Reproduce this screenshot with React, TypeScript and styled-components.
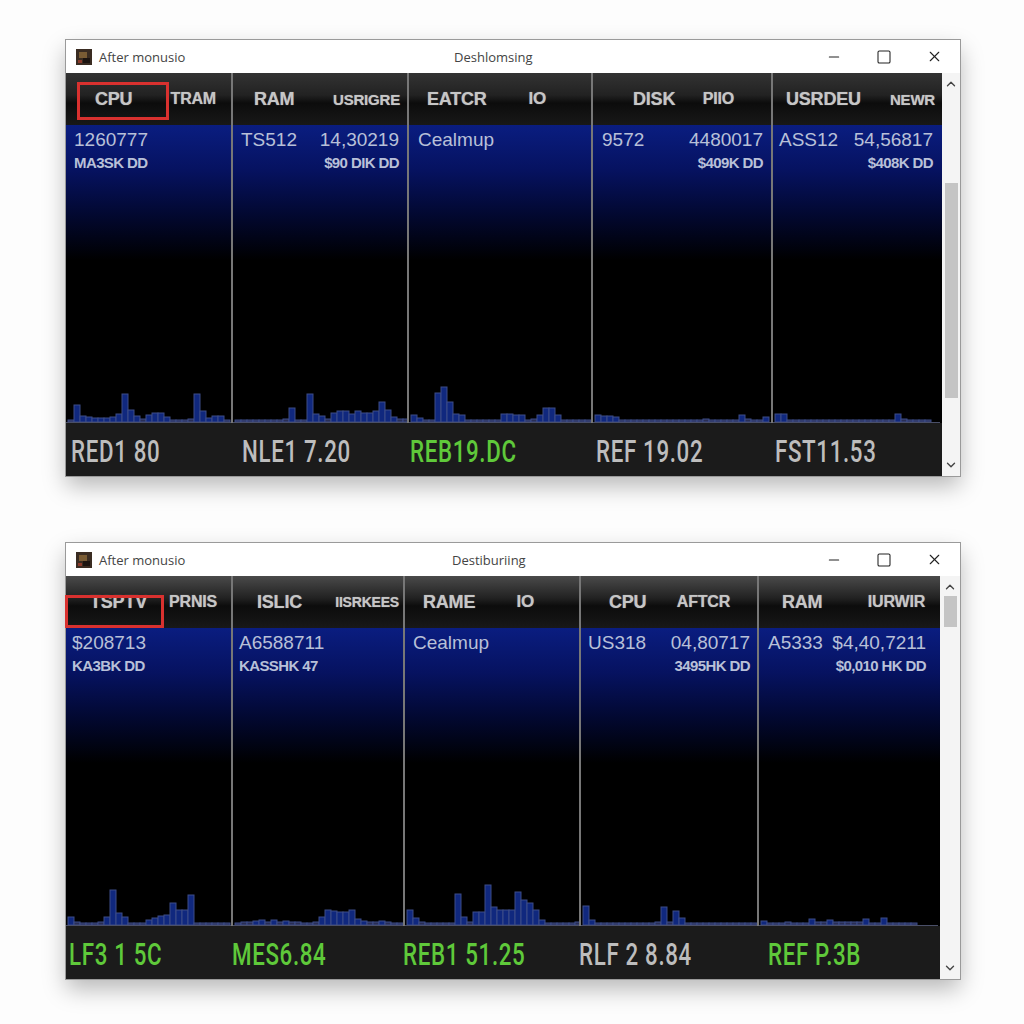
import React from 'react';
import styled, { createGlobalStyle } from 'styled-components';
import { ChevronDown, ChevronUp, Minus, Square, X } from 'lucide-react';

const GlobalStyle = createGlobalStyle`
  html, body {
    margin: 0;
    background: #fdfdfd;
  }
`;

const Page = styled.div`
  display: flex;
  flex-direction: column;
  gap: 67px;
  width: 1024px;
  height: 1024px;
  box-sizing: border-box;
  padding: 40px 0 0 66px;
  overflow: hidden;
`;

const Window = styled.section`
  position: relative;
  display: flex;
  flex-direction: column;
  width: 894px;
  height: 436px;
  background: #fff;
  outline: 1px solid #9a9a9a;
  box-shadow: 0 10px 22px rgba(0, 0, 0, 0.28);
`;

const TitleBar = styled.header<{ $titleX: number }>`
  display: grid;
  grid-template-columns: ${(p) => p.$titleX}px 1fr auto;
  align-items: center;
  height: 33px;
  flex: none;
  padding: 0 17px 0 10px;
  font-family: 'Open Sans', 'Liberation Sans', sans-serif;
  font-size: 13px;
  color: #444;
`;

const AppName = styled.div`
  display: flex;
  align-items: center;
  gap: 7px;
`;

const Controls = styled.div`
  display: flex;
  justify-content: flex-end;
  align-items: center;
  gap: 34px;
  color: #222;
`;

const Content = styled.div`
  display: flex;
  flex: 1;
  min-height: 0;
`;

const Column = styled.div<{ $w: number }>`
  display: flex;
  flex-direction: column;
  flex: none;
  width: ${(p) => p.$w}px;
  background: #1b1b1b;
`;

const ColumnMain = styled.div<{ $last?: boolean }>`
  display: flex;
  flex-direction: column;
  flex: 1;
  min-height: 0;
  box-sizing: border-box;
  border-right: ${(p) => (p.$last ? 'none' : '2px solid #777')};
  background: #000;
`;

const Head = styled.div<{ $l: number; $r: number; $top: string }>`
  display: flex;
  justify-content: space-between;
  align-items: center;
  height: 52px;
  flex: none;
  box-sizing: border-box;
  padding: 0 ${(p) => p.$r}px 0 ${(p) => p.$l}px;
  background: linear-gradient(${(p) => p.$top} 0, #222 22px, #0c0c0c 30px, #181818 100%);
`;

const HeadLabel = styled.span<{ $size: number }>`
  font-family: 'Liberation Sans', Arial, sans-serif;
  font-weight: 700;
  font-size: ${(p) => p.$size}px;
  letter-spacing: -0.2px;
  color: #c6c6c6;
  text-shadow: 0 0 1px rgba(220, 220, 220, 0.6);
  white-space: nowrap;
`;

const Readout = styled.div<{ $pad: number; $padR: number }>`
  display: flex;
  justify-content: space-between;
  flex: 1;
  min-height: 0;
  padding: 4px ${(p) => p.$padR}px 0 ${(p) => p.$pad}px;
  background: linear-gradient(#0a1d80 0, #061260 45px, #020830 90px, #000 135px) no-repeat;
  background-size: 100% 135px;
`;

const Block = styled.div<{ $right?: boolean }>`
  display: flex;
  flex-direction: column;
  align-items: ${(p) => (p.$right ? 'flex-end' : 'flex-start')};
`;

const Val = styled.span`
  font-family: 'Liberation Sans', Arial, sans-serif;
  font-size: 19px;
  line-height: 22px;
  color: #b8c0d8;
  white-space: nowrap;
`;

const Sub = styled.span`
  margin-top: 3px;
  font-family: 'Liberation Sans', Arial, sans-serif;
  font-weight: 700;
  font-size: 15px;
  line-height: 18px;
  letter-spacing: -0.6px;
  color: #b8c0d8;
  white-space: nowrap;
`;

const ChartSvg = styled.svg`
  display: block;
  flex: none;
`;

const Foot = styled.div`
  display: flex;
  align-items: center;
  height: 53px;
  flex: none;
  box-sizing: border-box;
  padding-top: 3px;
`;

const FootText = styled.span<{ $green?: boolean; $x: number }>`
  display: inline-block;
  margin-left: ${(p) => p.$x}px;
  font-family: Roboto, 'Liberation Sans', sans-serif;
  font-weight: 500;
  font-size: 31px;
  letter-spacing: 0.9px;
  white-space: pre;
  transform: scaleX(0.72);
  transform-origin: left center;
  color: ${(p) => (p.$green ? '#5fc93a' : '#bdbdbd')};
`;

const ScrollBar = styled.div`
  display: flex;
  flex-direction: column;
  align-items: center;
  flex: none;
  flex-grow: 1;
  background: #f4f4f4;
  color: #444;
  padding: 4px 0;
`;

const ScrollTrack = styled.div`
  flex: 1;
  width: 100%;
  display: flex;
  justify-content: center;
`;

const Thumb = styled.div<{ $top: number; $h: number }>`
  width: 13px;
  height: ${(p) => p.$h}px;
  margin-top: ${(p) => p.$top}px;
  background: #c4c4c4;
`;

// sits on top of the header cell, it marks the selected column
const Marker = styled.div<{ $x: number; $y: number; $w: number; $h: number }>`
  position: absolute;
  left: ${(p) => p.$x}px;
  top: ${(p) => p.$y}px;
  width: ${(p) => p.$w}px;
  height: ${(p) => p.$h}px;
  box-sizing: border-box;
  border: 3px solid #d9312f;
`;

type Col = {
  w: number;
  l: number;
  r: number;
  a: string;
  b: string;
  aSize?: number;
  bSize?: number;
  pad: number;
  padR?: number;
  v1: string;
  s1?: string;
  v2?: string;
  s2?: string;
  bars: number[];
  foot: string;
  footX: number;
  green?: boolean;
};

const Chart = ({ bars, w }: { bars: number[]; w: number }) => (
  <ChartSvg width={w} height={42} viewBox={`0 0 ${w} 42`}>
    {bars.map((h, i) => (
      <rect key={i} x={i * 6 + 2} y={41 - h} width={6} height={h} fill={h > 3 ? '#10287e' : '#2a2f55'} stroke="#3d4c88" strokeWidth={1} />
    ))}
    <line x1={0} y1={41.5} x2={w} y2={41.5} stroke="#4a4f68" strokeWidth={1} />
  </ChartSvg>
);

const AppIcon = () => (
  <svg width="16" height="16" viewBox="0 0 16 16">
    <rect width="16" height="16" fill="#3a2c22" />
    <rect x="3" y="3" width="8" height="6" fill="#7a5c34" />
    <rect x="7" y="9" width="7" height="5" fill="#1c1410" />
    <rect x="2" y="11" width="4" height="3" fill="#8a3a2a" />
  </svg>
);

const MonitorWindow = ({ title, titleX, headTop, cols, thumbTop, thumbH, mark }: {
  title: string;
  titleX: number;
  headTop: string;
  cols: Col[];
  thumbTop: number;
  thumbH: number;
  mark: { x: number; y: number; w: number; h: number };
}) => (
  <Window>
    <TitleBar $titleX={titleX}>
      <AppName>
        <AppIcon />
        After monusio
      </AppName>
      <span>{title}</span>
      <Controls>
        <Minus size={16} strokeWidth={1.6} />
        <Square size={16} strokeWidth={1.6} />
        <X size={17} strokeWidth={1.6} />
      </Controls>
    </TitleBar>
    <Content>
      {cols.map((c, i) => (
        <Column key={i} $w={c.w}>
          <ColumnMain $last={i === cols.length - 1}>
            <Head $l={c.l} $r={c.r} $top={headTop}>
              <HeadLabel $size={c.aSize ?? 18}>{c.a}</HeadLabel>
              <HeadLabel $size={c.bSize ?? 16}>{c.b}</HeadLabel>
            </Head>
            <Readout $pad={c.pad} $padR={c.padR ?? 8}>
              <Block>
                <Val>{c.v1}</Val>
                {c.s1 && <Sub>{c.s1}</Sub>}
              </Block>
              {c.v2 && (
                <Block $right>
                  <Val>{c.v2}</Val>
                  {c.s2 && <Sub>{c.s2}</Sub>}
                </Block>
              )}
            </Readout>
            <Chart bars={c.bars} w={c.w - 2} />
          </ColumnMain>
          <Foot>
            <FootText $green={c.green} $x={c.footX}>{c.foot}</FootText>
          </Foot>
        </Column>
      ))}
      <ScrollBar>
        <ChevronUp size={14} strokeWidth={2.4} />
        <ScrollTrack>
          <Thumb $top={thumbTop} $h={thumbH} />
        </ScrollTrack>
        <ChevronDown size={14} strokeWidth={2.4} />
      </ScrollBar>
    </Content>
    <Marker $x={mark.x} $y={mark.y} $w={mark.w} $h={mark.h} />
  </Window>
);

const topCols: Col[] = [
  {
    w: 167, l: 29, r: 15, a: 'CPU', b: 'TRAM', pad: 8, v1: '1260777', s1: 'MA3SK DD', foot: 'RED1 80', footX: 5,
    bars: [2, 17, 6, 5, 4, 4, 4, 5, 8, 28, 12, 6, 3, 7, 9, 9, 5, 2, 2, 2, 3, 28, 11, 4, 6, 6, 2],
  },
  {
    w: 176, l: 21, r: 7, a: 'RAM', b: 'USRIGRE', bSize: 15, pad: 8, v1: 'TS512', v2: '14,30219', s2: '$90 DIK DD', foot: 'NLE1 7.20', footX: 9,
    bars: [2, 2, 2, 2, 2, 2, 2, 2, 3, 14, 2, 2, 28, 8, 6, 3, 9, 11, 11, 8, 11, 9, 9, 11, 20, 12, 5, 3, 3],
  },
  {
    w: 184, l: 18, r: 45, a: 'EATCR', b: 'IO', bSize: 17, pad: 9, v1: 'Cealmup', foot: 'REB19.DC', footX: 1, green: true,
    bars: [7, 4, 2, 2, 29, 35, 20, 8, 7, 2, 2, 2, 2, 2, 2, 8, 8, 7, 7, 2, 3, 7, 14, 14, 7, 2, 2, 2, 2, 2],
  },
  {
    w: 180, l: 40, r: 37, a: 'DISK', b: 'PIIO', pad: 9, v1: '9572', v2: '4480017', s2: '$409K DD', foot: 'REF 19.02', footX: 3,
    bars: [7, 6, 6, 5, 2, 2, 2, 2, 2, 2, 2, 2, 2, 2, 2, 2, 2, 2, 3, 2, 2, 2, 2, 2, 7, 3, 2, 2, 5],
  },
  {
    w: 169, l: 13, r: 7, a: 'USRDEU', b: 'NEWR', bSize: 15, pad: 6, padR: 9, v1: 'ASS12', v2: '54,56817', s2: '$408K DD', foot: 'FST11.53', footX: 2,
    bars: [8, 8, 2, 2, 2, 2, 2, 2, 2, 2, 2, 2, 2, 2, 2, 2, 2, 2, 2, 2, 8, 3, 2, 2, 2, 2],
  },
];

const bottomCols: Col[] = [
  {
    w: 167, l: 24, r: 14, a: 'TSPTV', b: 'PRNIS', bSize: 16, pad: 6, v1: '$208713', s1: 'KA3BK DD', foot: 'LF3 1 5C', footX: 3, green: true,
    bars: [8, 3, 2, 2, 2, 3, 8, 35, 12, 8, 2, 2, 2, 5, 7, 9, 10, 22, 15, 15, 30, 2, 2, 2, 2, 2, 2],
  },
  {
    w: 172, l: 24, r: 4, a: 'ISLIC', b: 'IISRKEES', bSize: 14, pad: 6, v1: 'A6588711', s1: 'KASSHK 47', foot: 'MES6.84', footX: -1, green: true,
    bars: [2, 3, 3, 4, 5, 3, 5, 3, 4, 3, 3, 2, 2, 3, 8, 15, 14, 13, 13, 15, 6, 4, 3, 3, 4, 3, 2, 2],
  },
  {
    w: 176, l: 18, r: 45, a: 'RAME', b: 'IO', bSize: 17, pad: 8, v1: 'Cealmup', foot: 'REB1 51.25', footX: -2, green: true,
    bars: [15, 7, 3, 2, 2, 2, 2, 2, 31, 8, 3, 13, 13, 40, 18, 15, 15, 15, 33, 25, 22, 15, 5, 2, 2, 2, 2, 2, 3],
  },
  {
    w: 178, l: 28, r: 27, a: 'CPU', b: 'AFTCR', pad: 7, padR: 7, v1: 'US318', v2: '04,80717', s2: '3495HK DD', foot: 'RLF 2 8.84', footX: -2,
    bars: [19, 5, 2, 2, 2, 2, 2, 2, 2, 2, 2, 2, 3, 18, 3, 14, 7, 2, 2, 2, 2, 2, 2, 2, 2, 2, 2, 2, 2],
  },
  {
    w: 181, l: 23, r: 15, a: 'RAM', b: 'IURWIR', pad: 9, padR: 14, v1: 'A5333', v2: '$4,40,7211', s2: '$0,010 HK DD', foot: 'REF P.3B', footX: 9, green: true,
    bars: [4, 2, 2, 2, 3, 2, 2, 2, 6, 3, 3, 5, 3, 3, 3, 3, 3, 6, 2, 2, 7, 2, 2, 2, 2, 2],
  },
];

export default function App() {
  return (
    <>
      <GlobalStyle />
      <Page>
        <MonitorWindow title="Deshlomsing" titleX={378} headTop="#333" cols={topCols} thumbTop={92} thumbH={215} mark={{ x: 11, y: 42, w: 92, h: 38 }} />
        <MonitorWindow title="Destiburiing" titleX={376} headTop="#4a4a4a" cols={bottomCols} thumbTop={2} thumbH={31} mark={{ x: -1, y: 52, w: 99, h: 33 }} />
      </Page>
    </>
  );
}
